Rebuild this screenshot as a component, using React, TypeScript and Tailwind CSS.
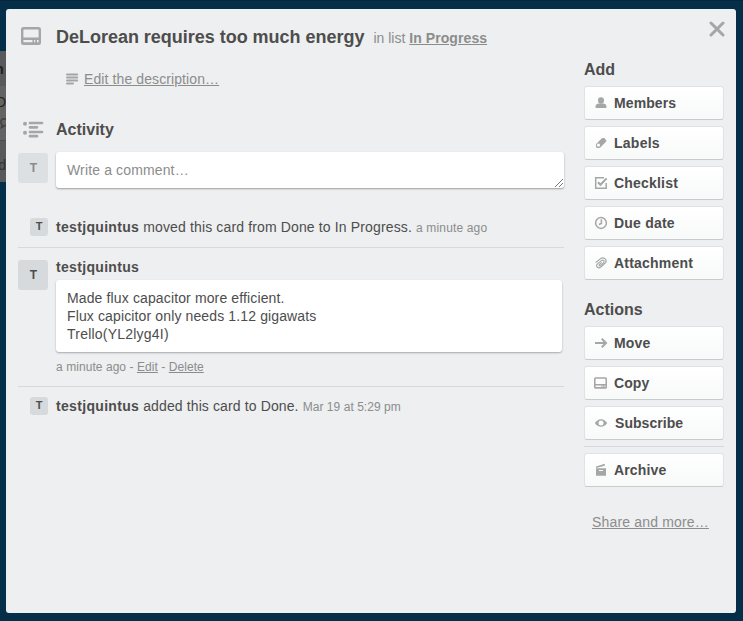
import type { ReactNode } from 'react';

function CardIcon({ className }: { className: string }) {
  return (
    <svg viewBox="0 0 20 18" className={className} fill="#a6a6a6">
      <path
        fillRule="evenodd"
        d="M2.5 0H17.5Q20 0 20 2.5V15.5Q20 18 17.5 18H2.5Q0 18 0 15.5V2.5Q0 0 2.5 0zM3 2.4Q2.4 2.4 2.4 3V10.6H17.6V3Q17.6 2.4 17 2.4zM2.4 13V15.2H11.5V13zM13 13V15.2H14.2V13zM16 13V15.2H17.6V13z"
      />
    </svg>
  );
}

const icons: Record<string, ReactNode> = {
  Members: (
    <g fill="#a6a6a6">
      <ellipse cx="7" cy="4.5" rx="3" ry="3.2" />
      <path d="M1.6 12V10.3C1.6 8.4 3.2 7.8 5 7.5h4c1.8.3 3.4.9 3.4 2.8V12z" />
    </g>
  ),
  Labels: (
    <path
      fill="#a6a6a6"
      fillRule="evenodd"
      d="M7.6 2.5Q8.2 2 9 2H10.4L12.2 4.2V5.6L6.6 11.3Q6 12 5 12H3.2Q2 11.8 2 10.7V9Q2 8.2 2.6 7.6zM4.5 7.6a1.6 1.6 0 1 0 .01 0z"
    />
  ),
  Checklist: (
    <g fill="none" stroke="#a6a6a6" strokeWidth="1.5">
      <path d="M10 1.8H1.7v10.4H12.2V7" />
      <path d="M4 6.2 6.4 8.8 12.6 2.4" strokeWidth="2" />
    </g>
  ),
  'Due date': (
    <g fill="none" stroke="#a6a6a6" strokeWidth="1.5">
      <circle cx="7" cy="7" r="5.4" />
      <path d="M7.4 3.2V7.4L4.9 8.5" />
    </g>
  ),
  Attachment: (
    <path
      fill="none"
      stroke="#a6a6a6"
      strokeWidth="1.15"
      strokeLinecap="round"
      d="M2 6.2 6.6 2.6C9.4.8 13.6 3.2 11.6 6.6L6.9 11C4.5 13 1.2 10.6 3.2 8.1L7.6 4.4C9.6 3.3 10.9 5.4 9.5 6.9L6.4 9.6C5.2 10.3 4.6 9.1 5.4 8.4L7.5 6.6"
    />
  ),
  Move: <path d="M1 7H12M7.8 2.8 12 7 7.8 11.2" fill="none" stroke="#a6a6a6" strokeWidth="2" />,
  Subscribe: (
    <path
      fill="#a6a6a6"
      fillRule="evenodd"
      d="M.8 7Q3.4 3.2 7 3.2T13.2 7Q10.6 10.8 7 10.8T.8 7zM7 4.5A2.5 2.5 0 1 0 7 9.5 2.5 2.5 0 1 0 7 4.5z"
    />
  ),
  Archive: (
    <g fill="#a6a6a6">
      <path d="M2 3.5 10.8.8V2.7L2 5z" />
      <path fillRule="evenodd" d="M2 5.3H12V12.8H2zM5 7V8.1H9V7z" />
    </g>
  ),
};

function SideButton({ name, spacing }: { name: string; spacing: string }) {
  return (
    <button className="flex h-[34px] w-[140px] items-center rounded-[3px] border border-[#e0e2e4] border-b-[#c8cbcd] bg-linear-to-b from-white to-[#f8f9f9] pl-[9px] text-left text-sm font-bold text-[#4d4d4d]">
      {name === 'Copy' ? (
        <CardIcon className="mr-[7px] h-[12px] w-[13px]" />
      ) : (
        <svg viewBox="0 0 14 14" className="mr-[6px] h-[14px] w-[14px]">{icons[name]}</svg>
      )}
      <span className={spacing}>{name}</span>
    </button>
  );
}

function Avatar({ small = false, faded = false }: { small?: boolean; faded?: boolean }) {
  return (
    <div
      className={
        (small ? 'ml-3 h-[18px] w-[18px] text-[11px] ' : 'h-[30px] w-[30px] pt-px pl-px text-[12px] ') +
        (faded ? 'bg-[#dce0e2] text-[#8a8a8a] ' : 'bg-[#d6dadc] text-[#4d4d4d] ') +
        'mr-2 flex shrink-0 items-center justify-center rounded-[3px] font-bold'
      }
    >
      T
    </div>
  );
}

export default function App() {
  return (
    <div className="relative h-[621px] w-[743px] overflow-hidden border-t border-[#03263b] bg-[#052f49] font-['Liberation_Sans',Arial,sans-serif] text-sm text-[#4d4d4d]">
      <div className="absolute top-[50px] left-0 h-[131px] w-[6px] overflow-hidden bg-[#58595b]">
        <div className="flex h-[35px] items-center justify-end pr-[2px] text-[15px] font-bold text-[#222]">n</div>
        <div className="h-[55px] border-b border-[#4b4b4b] bg-[#636363]">
          <div className="flex h-[31px] items-center justify-end text-[#222]">D</div>
          <svg viewBox="0 0 6 12" className="h-3 w-1.5" fill="none" stroke="#3e3e3e" strokeWidth="1.4">
            <path d="M6 2H2.5Q.8 3 .8 5T2.5 8L1.5 10.5 6 8" />
          </svg>
        </div>
        <div className="flex h-[40px] items-center justify-end pt-2 text-[#333]">d</div>
      </div>

      <div className="mt-2 ml-[6px] flex h-[604px] w-[730px] rounded-[3px] bg-[#edeff0] pl-3">
        <main className="w-[546px]">
          <header className="flex h-[56px] items-center">
            <CardIcon className="mb-[2px] ml-[3px] h-[18px] w-[20px]" />
            <h1 className="ml-[15px] text-lg font-bold tracking-[-0.02px] whitespace-nowrap">DeLorean requires too much energy</h1>
            <p className="ml-[9px] pt-px whitespace-nowrap text-[#8c8c8c]">
              in list <a className="font-bold tracking-[0.08px] underline">In Progress</a>
            </p>
          </header>
          <div className="flex h-[28px] items-center pl-[47px] text-[#8c8c8c]">
            <svg viewBox="0 0 14 12" className="mr-[5px] h-3 w-[14px]" stroke="#a6a6a6" strokeWidth="2" strokeLinecap="round">
              <path d="M2 1.5H12.2M2 4.5H12.2M2 7.5H12.2M2 10.5H8" />
            </svg>
            <a className="tracking-[0.1px] underline">Edit the description…</a>
          </div>
          <div className="mt-[22px] flex h-[28px] items-center">
            <svg viewBox="0 0 21 17" className="ml-[5px] h-[17px] w-[21px]" stroke="#a6a6a6" strokeWidth="2.7" strokeLinecap="round">
              <path d="M7 2H19M7 6.3H14M7 11H19M7 15.2H14" />
              <circle cx="2" cy="2.7" r="2" fill="#a6a6a6" stroke="none" />
              <circle cx="2" cy="11.8" r="2" fill="#a6a6a6" stroke="none" />
            </svg>
            <h2 className="ml-3 pt-[2px] text-base font-bold">Activity</h2>
          </div>
          <div className="mt-[9px] flex h-[37px]">
            <div className="pt-px"><Avatar faded /></div>
            <div className="flex h-[36px] w-[508px] items-center justify-between rounded-[3px] bg-white pl-[11px] text-[#8c8c8c] shadow-[0_1px_2px_rgba(0,0,0,0.35)]">
              <span className="tracking-[0.14px]">Write a comment…</span>
              <svg viewBox="0 0 10 10" className="h-[10px] w-[10px] self-end" stroke="#777">
                <path d="M1 9 9 1M5 9 9 5" />
              </svg>
            </div>
          </div>
          <div className="mt-[29px] flex h-[30px] items-start border-b border-[#d6dadc]">
            <Avatar small />
            <p className="leading-[18px] tracking-[0.14px] whitespace-nowrap">
              <b className="tracking-[0.32px]">testjquintus</b> moved this card from Done to In Progress. <span className="text-xs tracking-[0.16px] text-[#8c8c8c]">a minute ago</span>
            </p>
          </div>
          <div className="flex h-[139px] border-b border-[#d6dadc] pt-3">
            <Avatar />
            <div>
              <b className="mt-[-2px] block leading-[18px] tracking-[0.32px]">testjquintus</b>
              <div className="mt-1 h-[72px] w-[506px] rounded-[3px] bg-white px-[11px] py-[9px] leading-[18px] tracking-[0.13px] shadow-[0_1px_2px_rgba(0,0,0,0.3)]">
                Made flux capacitor more efficient.<br />
                Flux capicitor only needs 1.12 gigawats<br />
                <span className="tracking-[0.22px]">Trello(YL2lyg4I)</span>
              </div>
              <p className="mt-[6px] text-xs leading-[18px] tracking-[0.06px] text-[#8c8c8c]">
                a minute ago - <a className="underline">Edit</a> - <a className="underline">Delete</a>
              </p>
            </div>
          </div>
          <div className="flex items-start pt-[10px]">
            <Avatar small />
            <p className="leading-[18px] tracking-[0.12px] whitespace-nowrap">
              <b className="tracking-[0.32px]">testjquintus</b> added this card to Done. <span className="text-xs tracking-[0.05px] text-[#8c8c8c]">Mar 19 at 5:29 pm</span>
            </p>
          </div>
        </main>

        <aside className="ml-[20px] w-[140px]">
          <div className="flex h-[39px] items-center justify-end">
            <svg viewBox="0 0 16 16" className="mr-[-1px] h-4 w-4 shrink-0" stroke="#a6a6a6" strokeWidth="3" strokeLinecap="round">
              <path d="M2 2 14 14M14 2 2 14" />
            </svg>
          </div>
          <h3 className="mt-[12px] h-[26px] text-base leading-5 font-bold">Add</h3>
          <div className="flex flex-col gap-[6px]">
            <SideButton name="Members" spacing="tracking-[0.1px]" />
            <SideButton name="Labels" spacing="tracking-[0.25px]" />
            <SideButton name="Checklist" spacing="tracking-[0.2px]" />
            <SideButton name="Due date" spacing="tracking-[0.2px]" />
            <SideButton name="Attachment" spacing="tracking-[0.2px]" />
          </div>
          <h3 className="mt-[20px] h-[26px] text-base leading-5 font-bold">Actions</h3>
          <div className="flex flex-col gap-[6px]">
            <SideButton name="Move" spacing="tracking-[0.2px]" />
            <SideButton name="Copy" spacing="tracking-[0.1px]" />
            <SideButton name="Subscribe" spacing="ml-px tracking-[0.05px]" />
            <hr className="border-[#d6dadc]" />
            <SideButton name="Archive" spacing="tracking-[0.15px]" />
          </div>
          <a className="mt-[25px] ml-2 block tracking-[0.17px] whitespace-nowrap text-[#8c8c8c] underline">Share and more…</a>
        </aside>
      </div>
    </div>
  );
}
